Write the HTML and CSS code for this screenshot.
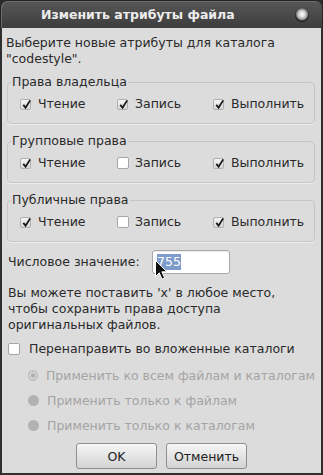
FILE: index.html
```html
<!DOCTYPE html>
<html lang="ru">
<head>
  <meta charset="UTF-8" />
  <title>Изменить атрибуты файла</title>
  <link rel="stylesheet" href="styles.css">
</head>
<body>
  <div class="window">
    <div class="titlebar">
      <span class="title">Изменить атрибуты файла</span>
      <span class="close"></span>
    </div>
    <div class="content">
      <p class="intro">Выберите новые атрибуты для каталога<br>"codestyle".</p>

      <fieldset class="group">
        <legend>Права владельца</legend>
        <div class="perm-row">
          <label class="check"><span class="box on"><svg viewBox="0 0 12 12"><path d="M2.5 6.5 L5 9.5 L10 1.5"/></svg></span>Чтение</label>
          <label class="check"><span class="box on"><svg viewBox="0 0 12 12"><path d="M2.5 6.5 L5 9.5 L10 1.5"/></svg></span>Запись</label>
          <label class="check"><span class="box on"><svg viewBox="0 0 12 12"><path d="M2.5 6.5 L5 9.5 L10 1.5"/></svg></span>Выполнить</label>
        </div>
      </fieldset>

      <fieldset class="group">
        <legend>Групповые права</legend>
        <div class="perm-row">
          <label class="check"><span class="box on"><svg viewBox="0 0 12 12"><path d="M2.5 6.5 L5 9.5 L10 1.5"/></svg></span>Чтение</label>
          <label class="check"><span class="box"></span>Запись</label>
          <label class="check"><span class="box on"><svg viewBox="0 0 12 12"><path d="M2.5 6.5 L5 9.5 L10 1.5"/></svg></span>Выполнить</label>
        </div>
      </fieldset>

      <fieldset class="group">
        <legend>Публичные права</legend>
        <div class="perm-row">
          <label class="check"><span class="box on"><svg viewBox="0 0 12 12"><path d="M2.5 6.5 L5 9.5 L10 1.5"/></svg></span>Чтение</label>
          <label class="check"><span class="box"></span>Запись</label>
          <label class="check"><span class="box on"><svg viewBox="0 0 12 12"><path d="M2.5 6.5 L5 9.5 L10 1.5"/></svg></span>Выполнить</label>
        </div>
      </fieldset>

      <div class="num-row">
        <span class="num-label">Числовое значение:</span>
        <div class="num-field">
          <div class="num-input"><span class="sel">755</span></div>
          <svg class="cursor" width="14" height="22" viewBox="0 0 14 22">
            <path d="M1.5 1.5 L1.5 17.5 L5.2 13.8 L8 20.2 L10.6 19 L7.9 12.8 L13 12.8 Z"/>
          </svg>
        </div>
      </div>

      <p class="hint">Вы можете поставить 'x' в любое место,<br>чтобы сохранить права доступа<br>оригинальных файлов.</p>

      <label class="check recurse"><span class="box"></span>Перенаправить во вложенные каталоги</label>

      <div class="radios">
        <div class="radio"><span class="dot sel"></span>Применить ко всем файлам и каталогам</div>
        <div class="radio"><span class="dot"></span>Применить только к файлам</div>
        <div class="radio"><span class="dot"></span>Применить только к каталогам</div>
      </div>

      <div class="buttons">
        <button class="btn">OK</button>
        <button class="btn">Отменить</button>
      </div>
    </div>
  </div>
</body>
</html>
```

FILE: styles.css
```css
* { margin: 0; padding: 0; box-sizing: border-box; }
html, body {
  width: 323px;
  height: 475px;
  background: #2b2b2b;
  font-family: "DejaVu Sans", sans-serif;
  font-size: 12.5px;
  color: #2a2a2a;
  overflow: hidden;
}
.window {
  height: 475px;
  display: flex;
  flex-direction: column;
  background: #2f2f2f;
  border-radius: 7px 7px 0 0;
}
.titlebar {
  height: 28px;
  flex: none;
  display: flex;
  align-items: center;
  padding: 0 13px 0 40px;
  background: linear-gradient(#575757, #3d3d3d);
  border: 1px solid #242424;
  border-bottom: none;
  border-radius: 7px 7px 0 0;
  box-shadow: inset 1px 1px 0 #6b6b6b;
  color: #ededed;
  font-size: 12.5px;
  font-weight: bold;
}
.title { flex: 1; }
.close {
  width: 14px;
  height: 14px;
  border-radius: 50%;
  background: radial-gradient(circle at 50% 45%, #ffffff 0, #d6d6d6 30%, #8c8c8c 52%, #1c1c1c 66%, #262626 100%);
}
.content {
  flex: 1;
  margin: 0 2px 3px;
  background: #dcdcdc;
  padding: 7px 6px 4px 4px;
  display: flex;
  flex-direction: column;
  line-height: 16px;
  white-space: nowrap;
}
.group {
  margin: 7px 0 0 1px;
  padding: 6px 6px 11px 3px;
  border: 1px solid #c6c6c6;
  border-radius: 4px;
  box-shadow: 0 1px 0 #ececec;
}
.group + .group { margin-top: 9px; }
.group legend {
  padding: 0 1px;
  line-height: 16px;
}
.perm-row {
  display: grid;
  grid-template-columns: 97px 96px 1fr;
  padding-left: 9px;
  height: 16px;
  align-items: center;
}
.check {
  display: flex;
  align-items: center;
  gap: 6px;
}
.box {
  width: 12px;
  height: 12px;
  border: 1px solid #a6a6a6;
  border-radius: 2px;
  background: #fff;
  position: relative;
}
.box.on {
  width: 11px;
  height: 11px;
  margin-right: 1px;
  background: linear-gradient(#f4f4f4, #d8d8d8);
  border-color: #b0b0b0;
}
.box svg {
  position: absolute;
  left: 0;
  top: -1px;
  width: 11px;
  height: 11px;
  overflow: visible;
}
.box svg path {
  fill: none;
  stroke: #1a1a1a;
  stroke-width: 2;
}
.num-row {
  display: flex;
  align-items: center;
  margin-top: 8px;
  padding-left: 2px;
}
.num-label { width: 144px; }
.num-field { position: relative; }
.num-input {
  width: 78px;
  height: 24px;
  border: 1px solid #a9a9a9;
  border-radius: 3px;
  background: #fff;
  padding: 3px 0 0 4px;
  box-shadow: inset 0 1px 1px rgba(0, 0, 0, 0.08);
}
.sel {
  display: inline-block;
  background: #7d9bcb;
  color: #fff;
  line-height: 16px;
}
.cursor {
  position: absolute;
  left: 2px;
  top: 9px;
}
.cursor path {
  fill: #111;
  stroke: #fff;
  stroke-width: 1;
  stroke-linejoin: round;
}
.hint { margin-top: 11px; padding-left: 2px; }
.recurse {
  margin-top: 8px;
  padding-left: 2px;
  gap: 9px;
}
.radios {
  margin-top: 6px;
  padding-left: 22px;
  color: #a4a4a4;
}
.radio {
  height: 25px;
  display: flex;
  align-items: center;
  gap: 8px;
}
.dot {
  width: 11px;
  height: 11px;
  border-radius: 50%;
  background: #b2b2b2;
}
.dot.sel {
  background: radial-gradient(circle, #b0b0b0 0, #b0b0b0 30%, #d2d2d2 38%, #c8c8c8 100%);
  border: 1px solid #bcbcbc;
}
.buttons {
  display: flex;
  justify-content: center;
  gap: 9px;
  margin-top: 5px;
  padding-left: 2px;
}
.btn {
  width: 81px;
  height: 26px;
  border: 1px solid #8f8f8f;
  border-radius: 3px;
  background: linear-gradient(#f6f6f6, #d2d2d2);
  font-family: "DejaVu Sans", sans-serif;
  font-size: 12.5px;
  color: #222;
}
```
